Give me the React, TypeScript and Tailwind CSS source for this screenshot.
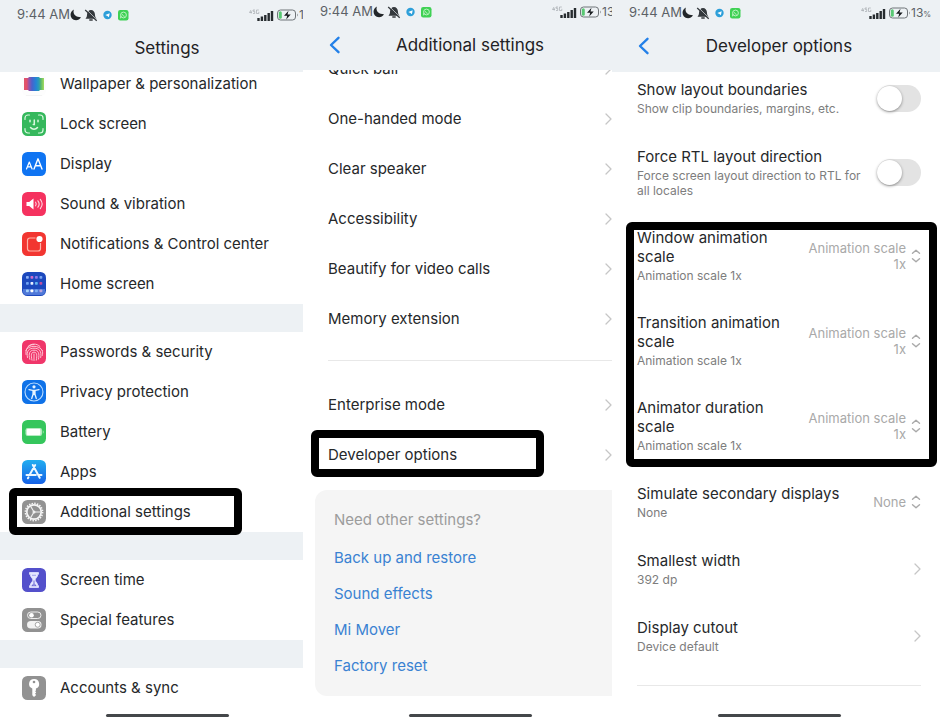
import { useState, type ReactNode } from 'react'

type SettingItem = {
  label: string
  icon: ReactNode
  highlighted?: boolean
}

/* App icons, all drawn on a 24x24 tile */

function Tile({ color, children }: { color: string; children: ReactNode }) {
  return (
    <svg viewBox="0 0 24 24" className="size-6 shrink-0" fill="none" aria-hidden="true">
      <rect width="24" height="24" rx="5.5" fill={color} />
      {children}
    </svg>
  )
}

const WallpaperIcon = (
  <svg viewBox="0 0 24 24" className="size-6 shrink-0" fill="none" aria-hidden="true">
    <defs>
      <linearGradient id="rainbow" x1="0" y1="0" x2="1" y2="0">
        <stop offset="0" stopColor="#e0566c" />
        <stop offset="0.14" stopColor="#e2506c" />
        <stop offset="0.24" stopColor="#9a55a8" />
        <stop offset="0.4" stopColor="#4a62cc" />
        <stop offset="0.6" stopColor="#2385d6" />
        <stop offset="0.76" stopColor="#2f9fae" />
        <stop offset="0.84" stopColor="#58b86a" />
        <stop offset="1" stopColor="#a5dc5c" />
      </linearGradient>
    </defs>
    <rect width="24" height="24" rx="5.5" fill="#fdfdfd" />
    <path d="M4 23.6h16" stroke="#ececec" strokeWidth="0.6" />
    <path d="M2 6h4l1-1h10l1 1h4v12h-4l-1 1H7l-1-1H2z" fill="url(#rainbow)" />
  </svg>
)

const LockScreenIcon = (
  <Tile color="#35b85c">
    <g stroke="#d9f7df" strokeWidth="1.2" strokeLinecap="round">
      <path d="M3 7.5V6a3 3 0 0 1 3-3h1.5M16.5 3H18a3 3 0 0 1 3 3v1.5M21 16.5V18a3 3 0 0 1-3 3h-1.5M7.5 21H6a3 3 0 0 1-3-3v-1.5" />
      <path d="M8 8.3v1.5M16 8.3v1.5M12.3 8v4.5h-1M8.5 15.5c1.9 2.3 5.1 2.3 7 0" strokeWidth="1.5" />
    </g>
  </Tile>
)

const DisplayIcon = (
  <Tile color="#0f74f2">
    <g stroke="#fff" strokeWidth="1.2" strokeLinecap="round" strokeLinejoin="round">
      <path d="M4.5 17l2.8-7 2.8 7M5.5 14.8h3.6" />
      <path d="M12 17l4-10.2L20 17M13.3 13.8h5.4" strokeWidth="1.4" />
    </g>
  </Tile>
)

const SoundIcon = (
  <Tile color="#f5325f">
    <path d="M4.5 10h2.7l4.3-3.6v11.2L7.2 14H4.5z" fill="#fff" />
    <g stroke="#ffd5df" strokeWidth="1.1" strokeLinecap="round">
      <path d="M13.6 10.2c.8 1.1.8 2.5 0 3.6M15.9 8.8c1.5 1.9 1.5 4.5 0 6.4M18.3 7.4c2.2 2.7 2.2 6.5 0 9.2" />
    </g>
  </Tile>
)

const NotificationIcon = (
  <Tile color="#f23631">
    <path d="M13.5 6H8a2.5 2.5 0 0 0-2.5 2.5v8A2.5 2.5 0 0 0 8 19h8a2.5 2.5 0 0 0 2.5-2.5V11" stroke="#ffb3a8" strokeWidth="1.2" />
    <circle cx="17.5" cy="7" r="3.1" fill="#fff" />
  </Tile>
)

const HomeScreenIcon = (
  <Tile color="#1c48bd">
    <path d="M1 17h22v2.5a3.5 3.5 0 0 1-3.5 3.5h-15A3.5 3.5 0 0 1 1 19.5z" fill="#4f78d8" />
    <rect x="4" y="4" width="2.8" height="2.8" rx=".7" fill="#8fb2f5" />
    <rect x="8.5" y="4" width="2.8" height="2.8" rx=".7" fill="#d06bc8" />
    <rect x="13" y="4" width="2.8" height="2.8" rx=".7" fill="#8d7bea" />
    <rect x="17.5" y="4" width="2.8" height="2.8" rx=".7" fill="#79a4f0" />
    <rect x="4" y="10" width="2.8" height="2.8" rx=".7" fill="#6fa2f2" />
    <rect x="8.5" y="10" width="2.8" height="2.8" rx=".7" fill="#e9f0ff" />
    <rect x="13" y="10" width="2.8" height="2.8" rx=".7" fill="#64b5f0" />
    <rect x="17.5" y="10" width="2.8" height="2.8" rx=".7" fill="#c1509f" />
    <rect x="4" y="17.5" width="2.8" height="2.8" rx=".7" fill="#a5d1fa" />
    <rect x="8.5" y="17.5" width="2.8" height="2.8" rx=".7" fill="#fff" />
    <rect x="13" y="17.5" width="2.8" height="2.8" rx=".7" fill="#7fb0f4" />
    <rect x="17.5" y="17.5" width="2.8" height="2.8" rx=".7" fill="#b9a5dd" />
  </Tile>
)

const FingerprintIcon = (
  <Tile color="#f0366a">
    <g stroke="#ffd0dc" strokeWidth="0.9" strokeLinecap="round">
      <path d="M6 6.5c3.3-3.3 8.700-3.300 12 0" />
      <path d="M4 14.5c-1-8.5 5-10 8-10M3.8 10.500C6 4.800 18 4.800 20.200 10.500" />
      <path d="M5.5 17.500C4 11 7 8.200 12 8.200s8 2.800 6.700 9.300" />
      <path d="M7.8 19.300C6.300 13.500 7.500 10.200 12 10.200s5.700 3.300 4.500 8.900" />
      <path d="M10 20.200c-1.200-5.500-.8-8 2-8s3.300 2.500 2.300 8M12 14v6.500" />
      <path d="M20.300 10.500c.5 1.800.4 3.500 0 5" />
    </g>
  </Tile>
)

const PrivacyIcon = (
  <Tile color="#0f72e8">
    <circle cx="12" cy="12" r="9" stroke="#b9dcff" strokeWidth="1.1" />
    <circle cx="12" cy="6.8" r="1.6" fill="#e6f3ff" />
    <path d="M7 9.700l3.700.6h2.600l3.700-.6M11 10.300v4l-1.300 4.200M13 10.300v4l1.300 4.200M12 10.500v4" stroke="#e6f3ff" strokeWidth="1.3" strokeLinecap="round" strokeLinejoin="round" />
  </Tile>
)

const BatteryIcon = (
  <Tile color="#35c65c">
    <rect x="3.5" y="8" width="16.5" height="8" rx="2.2" fill="#b5ecc1" />
    <rect x="4.8" y="9" width="13.5" height="6" rx="1" fill="#fff" />
    <path d="M20.800 10.300c1 .6 1 2.800 0 3.400z" fill="#c5f0ce" />
  </Tile>
)

const AppsIcon = (
  <Tile color="url(#apps-blue)">
    <defs>
      <linearGradient id="apps-blue" x1="0" y1="0" x2="0" y2="1">
        <stop offset="0" stopColor="#22aef0" />
        <stop offset="1" stopColor="#1560e6" />
      </linearGradient>
    </defs>
    <g stroke="#eef8ff" strokeWidth="2" strokeLinecap="round">
      <path d="M13.200 5L7.800 14.500M10.800 5l6.900 12.800M4.500 14.900h9.300M17 14.900h2.500M6.500 17.300l-.6 1" />
    </g>
  </Tile>
)

const GearIcon = (
  <Tile color="#929292">
    <circle cx="12" cy="12" r="8.6" stroke="#f5f5f5" strokeWidth="1.6" strokeDasharray="1.5 1.2" />
    <circle cx="12" cy="12" r="7.2" stroke="#f5f5f5" strokeWidth="1.7" />
    <path d="M12 12h6.500M12 12L8.700 6.400M12 12l-3.300 5.600" stroke="#efefef" strokeWidth="1.1" />
    <circle cx="12" cy="12" r="1.5" fill="#efefef" />
  </Tile>
)

const ScreenTimeIcon = (
  <Tile color="#5450cb">
    <path d="M7.500 4.500h9v1.800h-.8c0 3.200-2.600 3.900-2.600 5.700s2.600 2.500 2.600 5.700h.8v1.800h-9v-1.800h.8c0-3.200 2.600-3.900 2.600-5.700S8.300 9.500 8.300 6.300h-.8z" fill="#e5e6ff" stroke="#e5e6ff" strokeWidth=".8" strokeLinejoin="round" />
    <path d="M12 12.500v3.300l-2.200 1.900h4.400L12 15.800" stroke="#5450cb" strokeWidth=".8" />
    <path d="M10 7.300h4" stroke="#9a99ea" strokeWidth=".9" />
  </Tile>
)

const SpecialIcon = (
  <Tile color="#929292">
    <rect x="5.5" y="4" width="13.5" height="6.5" rx="3.25" stroke="#eee" strokeWidth="1" />
    <circle cx="9.5" cy="7.25" r="2.3" fill="#fff" />
    <rect x="5" y="13" width="14.5" height="7.5" rx="3.75" fill="#f2f2f2" />
    <circle cx="15.7" cy="16.75" r="2.5" fill="#fff" stroke="#9c9c9c" strokeWidth=".9" />
  </Tile>
)

const AccountsIcon = (
  <Tile color="#929292">
    <path d="M12 3a4.900 4.900 0 0 0-1.700 9.500v6.800l1.700 1.800 2.200-2-1.200-1.300 1.200-1.300-1-1.200.7-.8v-2A4.900 4.900 0 0 0 12 3z" fill="#fff" />
    <circle cx="12" cy="6" r="1.3" fill="#929292" />
  </Tile>
)

const settingGroups: SettingItem[][] = [
  [
    { label: 'Wallpaper & personalization', icon: WallpaperIcon },
    { label: 'Lock screen', icon: LockScreenIcon },
    { label: 'Display', icon: DisplayIcon },
    { label: 'Sound & vibration', icon: SoundIcon },
    { label: 'Notifications & Control center', icon: NotificationIcon },
    { label: 'Home screen', icon: HomeScreenIcon },
  ],
  [
    { label: 'Passwords & security', icon: FingerprintIcon },
    { label: 'Privacy protection', icon: PrivacyIcon },
    { label: 'Battery', icon: BatteryIcon },
    { label: 'Apps', icon: AppsIcon },
    { label: 'Additional settings', icon: GearIcon, highlighted: true },
  ],
  [
    { label: 'Screen time', icon: ScreenTimeIcon },
    { label: 'Special features', icon: SpecialIcon },
  ],
  [{ label: 'Accounts & sync', icon: AccountsIcon }],
]

const additionalItems = [
  'Quick ball',
  'One-handed mode',
  'Clear speaker',
  'Accessibility',
  'Beautify for video calls',
  'Memory extension',
]

const otherSettings = ['Back up and restore', 'Sound effects', 'Mi Mover', 'Factory reset']

const animationSettings = [
  'Window animation scale',
  'Transition animation scale',
  'Animator duration scale',
]

const animationScales = ['Animation off', 'Animation scale .5x', 'Animation scale 1x', 'Animation scale 2x']

function StatusBar() {
  return (
    <div className="flex h-5 items-center pl-[17px] text-[#5c6166]">
      <span className="text-[13px]">9:44 AM</span>
      <svg viewBox="0 0 60 14" className="h-3.5 w-[60px]" fill="none" aria-hidden="true">
        {/* moon */}
        <path d="M4 1.500C2.500 5 4.500 9 11 9.200 9 13 4 13 1.700 10.200-.5 7.300.5 3 4 1.500z" fill="#222629" />
        {/* muted bell */}
        <path d="M15.500 10.700c1.500-1.500 1.400-3 1.600-4.700.2-2.400 1.700-3.800 3.900-4 2.200.2 3.700 1.600 3.900 4 .2 1.700.1 3.200 1.600 4.700z" fill="#34393d" />
        <path d="M19.300 12h3.400" stroke="#34393d" strokeWidth="1.5" />
        <path d="M16.200 1.500l11 10.500" stroke="#edf1f4" strokeWidth=".8" />
        <path d="M15.200 2l11.500 10.800" stroke="#34393d" strokeWidth="1.3" />
        <circle cx="37.500" cy="7" r="4.200" fill="#2d9fd9" />
        <path d="M35.300 7l4.400-1.800-.8 4-1.500-1.100z" fill="#fff" />
        <rect x="48" y="2" width="10.500" height="10.500" rx="2.2" fill="#3fd154" />
        <circle cx="53.500" cy="7" r="2.9" stroke="#c9f5cd" strokeWidth=".9" />
        <path d="M50.500 10.300l.4-2.200M52.300 6.200c.2 1.200 1.200 2 2.300 2.200" stroke="#c9f5cd" strokeWidth=".9" />
      </svg>
      <div className="ml-auto flex w-[85px] items-center">
        <svg viewBox="0 0 50 14" className="h-3.5 w-[50px] shrink-0" fill="none" aria-hidden="true">
          <path d="M2 2L.5 4.500h2.300M2.200 3v2.500M6 2H4v1.300h1.700v2.200H4M9.800 2H7.500v3.500h2.300V3.800" stroke="#9aa0a4" strokeWidth=".6" />
          <path d="M9.500 10v3M12.900 8.500V13M16.300 7v6M19.700 5v8M23 3v10" stroke="#262b2e" strokeWidth="2.4" />
          <rect x="28.500" y="2" width="18" height="10" rx="3" stroke="#6f7478" strokeWidth="1" />
          <rect x="29.800" y="3.300" width="3" height="7.400" rx="1.5" fill="#58c873" />
          <path d="M39.500 2.700l-4.500 5h3.200l-1 3.800 4.500-5h-3.200z" fill="#15191c" />
          <path d="M48.300 5.500c.9.700.9 2.300 0 3z" fill="#6f7478" />
        </svg>
        <span className="text-xs">
          13<span className="text-[8px]">%</span>
        </span>
      </div>
    </div>
  )
}

function Header({ title, back, className }: { title: string; back?: boolean; className: string }) {
  return (
    <header className={`relative z-10 bg-[#edf1f4] ${className}`}>
      <div className="w-[334px]">
        <StatusBar />
        <div className="mt-[11px] grid h-6 grid-cols-[1fr_auto_1fr] items-center">
          <div className="pl-6">
            {back && (
              <button type="button" aria-label="Back" className="block text-[#2380e8]">
                <svg viewBox="0 0 16 18" className="h-[18px] w-4" fill="none" aria-hidden="true">
                  <path d="M11.500 1.800L4 9l7.500 7.200" stroke="currentColor" strokeWidth="2.4" strokeLinecap="round" strokeLinejoin="round" />
                </svg>
              </button>
            )}
          </div>
          <h1 className="text-[17px] leading-6 text-[#1f2225]">{title}</h1>
        </div>
      </div>
    </header>
  )
}

function HomeIndicator() {
  return (
    <div className="mt-auto flex w-[334px] justify-center pb-[3px]">
      <div className="h-[3px] w-[123px] rounded-full bg-[#44474a]" />
    </div>
  )
}

function ChevronRight() {
  return (
    <svg viewBox="0 0 8 14" className="h-3.5 w-2 shrink-0" fill="none" aria-hidden="true">
      <path d="M2 2l5 5-5 5" stroke="#c6c6c6" strokeWidth="1.3" strokeLinecap="round" strokeLinejoin="round" />
    </svg>
  )
}

function UpDown() {
  return (
    <svg viewBox="0 0 10 16" className="h-4 w-2.5 shrink-0" fill="none" aria-hidden="true">
      <path d="M1.500 5.300L5 2.200l3.500 3.100M1.500 10.700L5 13.800l3.500-3.100" stroke="#a9a9a9" strokeWidth="1.4" strokeLinecap="round" strokeLinejoin="round" />
    </svg>
  )
}

function ListLink({ label, children }: { label: string; children?: ReactNode }) {
  return (
    <li className="relative">
      {children}
      <a href="#" className="flex h-[50px] items-center justify-between pl-[25px] text-[15px]">
        {label}
        <ChevronRight />
      </a>
    </li>
  )
}

function RowText({ title, note }: { title: string; note: string }) {
  return (
    <span className="flex flex-col gap-0.5">
      <span className="text-[15px] leading-[19px]">{title}</span>
      <span className="text-xs leading-[15px] text-[#7d7d7d]">{note}</span>
    </span>
  )
}

function ToggleRow({ title, note }: { title: string; note: string }) {
  const [on, setOn] = useState(false)

  return (
    <label className="flex items-center justify-between gap-2">
      <RowText title={title} note={note} />
      <input
        type="checkbox"
        role="switch"
        checked={on}
        onChange={(e) => setOn(e.target.checked)}
        className="h-[27px] w-11 shrink-0 appearance-none rounded-full bg-[#e3e3e3] before:block before:size-[25px] before:translate-y-px before:rounded-full before:bg-white before:shadow-[0_1px_3px_rgba(0,0,0,0.4)] checked:bg-[#2380e8] checked:before:translate-x-[19px]"
      />
    </label>
  )
}

function SelectRow({ title, initial, options }: { title: string; initial: string; options: string[] }) {
  const [value, setValue] = useState(initial)

  return (
    <label className="relative flex items-center justify-between gap-3">
      <RowText title={title} note={value} />
      <span className="flex shrink-0 items-center gap-[5px]">
        <span className="max-w-[100px] text-right text-[13px] leading-4 text-[#a9a9a9]">{value}</span>
        <UpDown />
      </span>
      {/* native picker sits over the row so the value can wrap */}
      <select
        value={value}
        onChange={(e) => setValue(e.target.value)}
        className="absolute inset-0 w-full opacity-0"
      >
        {options.map((option) => (
          <option key={option}>{option}</option>
        ))}
      </select>
    </label>
  )
}

function DetailLink({ title, note }: { title: string; note: string }) {
  return (
    <a href="#" className="flex items-center justify-between">
      <RowText title={title} note={note} />
      <ChevronRight />
    </a>
  )
}

function Highlight({ className }: { className: string }) {
  return <div className={`pointer-events-none absolute z-10 rounded-md border-8 border-black ${className}`} />
}

function SettingsScreen() {
  return (
    <section className="flex flex-col overflow-hidden">
      <Header title="Settings" className="h-[72px] pt-[5px]" />
      <div className="-mt-2 flex flex-col gap-7 bg-[#edf1f4]">
        {settingGroups.map((group) => (
          <ul key={group[0].label} className="bg-white">
            {group.map((item) => (
              <li key={item.label} className="relative">
                {item.highlighted && <Highlight className="-top-1 -bottom-[3px] left-[9px] w-[233px]" />}
                <a href="#" className="flex h-10 items-center gap-3.5 pl-[22px] text-[15px]">
                  {item.icon}
                  {item.label}
                </a>
              </li>
            ))}
          </ul>
        ))}
      </div>
      <HomeIndicator />
    </section>
  )
}

function AdditionalScreen() {
  return (
    <section className="flex flex-col overflow-hidden">
      <Header title="Additional settings" back className="h-[70px] pt-0.5" />
      <ul className="-mt-[26px]">
        {additionalItems.map((label) => (
          <ListLink key={label} label={label} />
        ))}
      </ul>
      <hr className="mt-4 mb-[19px] ml-[25px] border-[#e8e8e8]" />
      <ul>
        <ListLink label="Enterprise mode" />
        <ListLink label="Developer options">
          <Highlight className="top-0 bottom-[3px] left-2 w-[233px]" />
        </ListLink>
      </ul>
      <div className="mt-2.5 ml-3 rounded-l-xl bg-[#f5f5f5] pt-[18px] pb-3 pl-[19px] text-[15px]">
        <h2 className="mb-2 leading-6 text-[#9c9c9c]">Need other settings?</h2>
        <ul>
          {otherSettings.map((label) => (
            <li key={label}>
              <a href="#" className="flex h-9 items-center text-[#3a82d2]">
                {label}
              </a>
            </li>
          ))}
        </ul>
      </div>
      <HomeIndicator />
    </section>
  )
}

function DeveloperScreen() {
  return (
    <section className="flex flex-col overflow-hidden">
      <Header title="Developer options" back className="h-[72px] pt-[3px]" />
      <div className="mt-2 flex flex-col gap-[30px]">
        <div className="flex flex-col gap-[31px] pr-[19px] pl-[25px]">
          <ToggleRow title="Show layout boundaries" note="Show clip boundaries, margins, etc." />
          <ToggleRow title="Force RTL layout direction" note="Force screen layout direction to RTL for all locales" />
        </div>
        <div className="relative flex flex-col gap-[30px] pr-[19px] pb-px pl-[25px]">
          <Highlight className="-top-1.5 right-[3px] -bottom-[13px] left-3.5" />
          {animationSettings.map((title) => (
            <SelectRow key={title} title={title} initial="Animation scale 1x" options={animationScales} />
          ))}
        </div>
        <div className="flex flex-col gap-[31px] pr-[19px] pl-[25px]">
          <SelectRow title="Simulate secondary displays" initial="None" options={['None', '480p', '720p', '1080p']} />
          <DetailLink title="Smallest width" note="392 dp" />
          <DetailLink title="Display cutout" note="Device default" />
          <hr className="border-[#e8e8e8]" />
        </div>
      </div>
      <HomeIndicator />
    </section>
  )
}

export default function App() {
  return (
    <main className="grid min-h-screen grid-cols-[303fr_309fr_328fr] bg-white font-['Inter',sans-serif] text-[#26282a]">
      <SettingsScreen />
      <AdditionalScreen />
      <DeveloperScreen />
    </main>
  )
}
